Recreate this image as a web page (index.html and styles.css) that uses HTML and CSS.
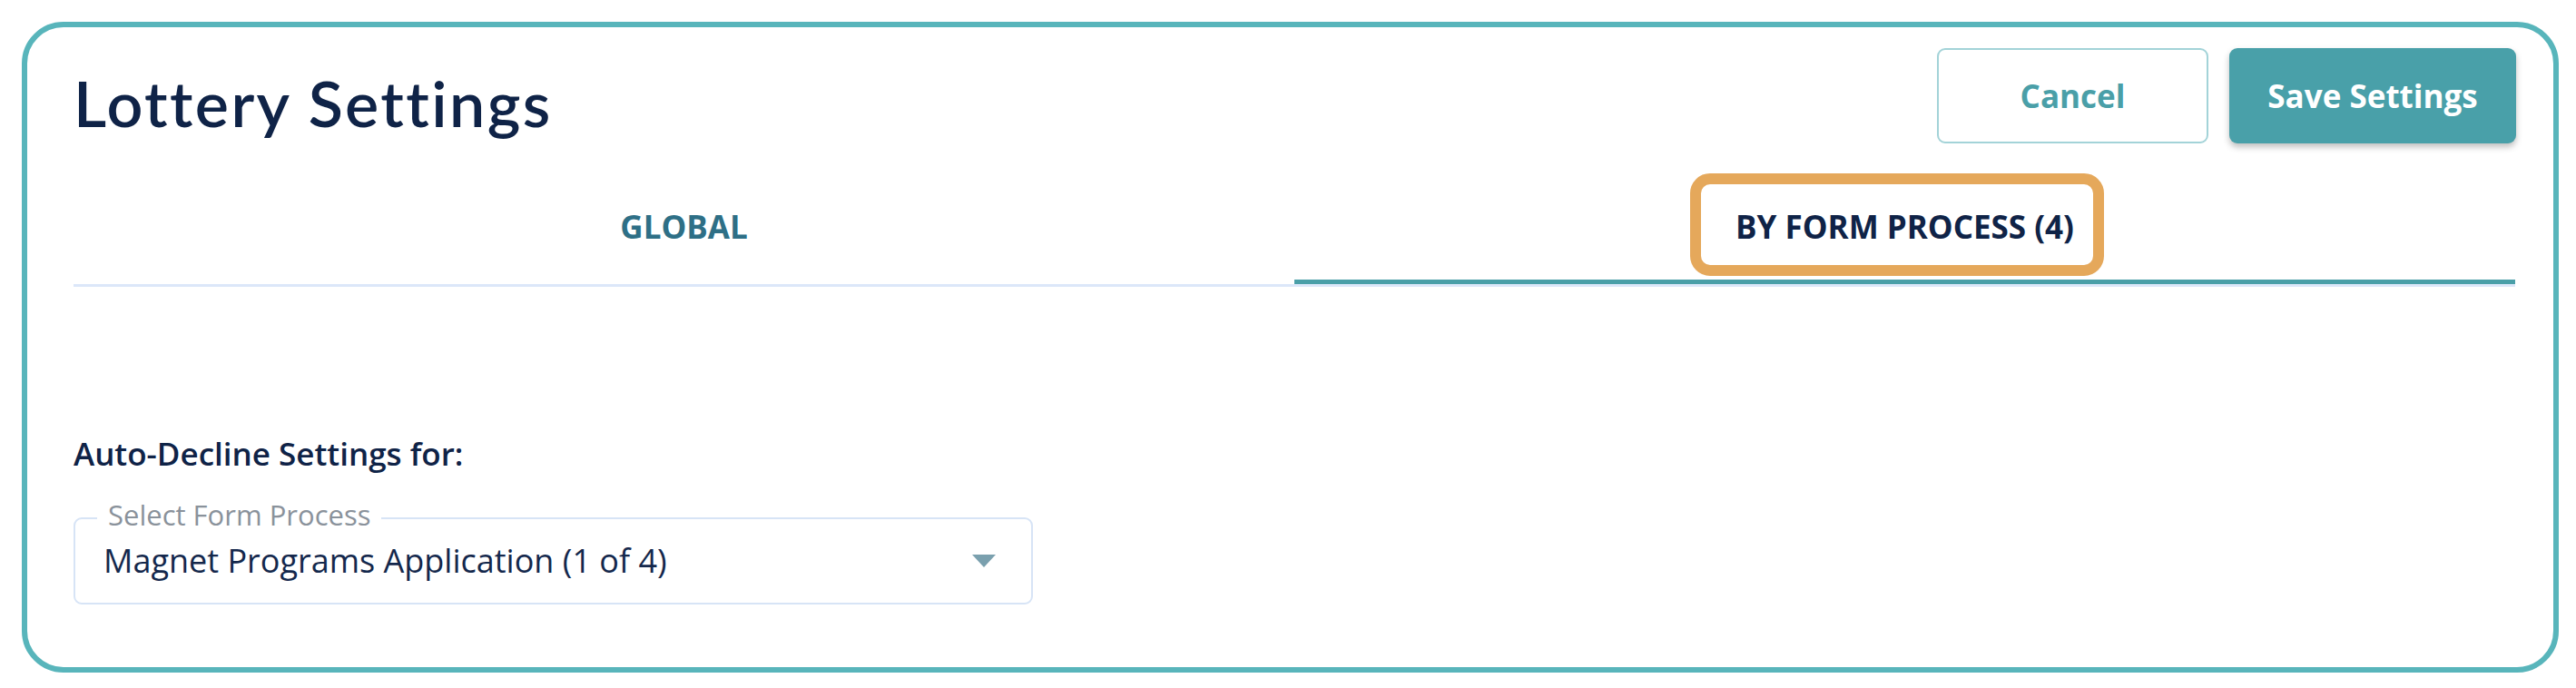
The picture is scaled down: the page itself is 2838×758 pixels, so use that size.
FILE: index.html
```html
<!DOCTYPE html>
<html lang="en">
<head>
  <meta charset="UTF-8">
  <meta name="viewport" content="width=device-width, initial-scale=1.0">
  <title>Lottery Settings</title>
  <link rel="stylesheet" href="styles.css">
</head>
<body>
  <div class="panel">
    <div class="panel-header">
      <h1>Lottery Settings</h1>
      <div class="actions">
        <button type="button" class="btn btn-outline">Cancel</button>
        <button type="button" class="btn btn-primary">Save Settings</button>
      </div>
    </div>

    <div class="tabs">
      <div class="tab">GLOBAL</div>
      <div class="tab active"><span class="tab-label highlighted">BY FORM PROCESS (4)</span></div>
    </div>

    <div class="section">
      <h2>Auto-Decline Settings for:</h2>
      <div class="select">
        <span class="select-label">Select Form Process</span>
        <span class="select-value">Magnet Programs Application (1 of 4)</span>
        <span class="select-arrow"></span>
      </div>
    </div>
  </div>
</body>
</html>
```

FILE: styles.css
```css
body {
  margin: 0;
  background: #fff;
  font-family: 'Open Sans', 'Noto Sans', sans-serif;
  color: #0f2347;
}

.panel {
  margin: 24px 19px 17px 24px;
  border: 6px solid #58b5bb;
  border-radius: 46px;
  padding: 23px 41px 69px 51px;
}

.panel-header {
  display: flex;
  justify-content: space-between;
  align-items: flex-start;
}

h1 {
  margin: 18px 0 0;
  font-family: Lato, 'Open Sans', sans-serif;
  font-weight: 600;
  font-size: 70px;
  line-height: 84px;
  letter-spacing: 2.4px;
  color: #0f2347;
}

.actions {
  display: flex;
  gap: 23px;
}

.btn {
  height: 105px;
  border-radius: 9px;
  font-family: 'Open Sans', sans-serif;
  font-weight: 700;
  font-size: 35px;
  cursor: pointer;
}

.btn-outline {
  width: 299px;
  background: #fff;
  border: 2px solid #a3d3d8;
  color: #4a9fa8;
}

.btn-primary {
  width: 316px;
  background: #49a0a9;
  border: none;
  color: #fff;
  box-shadow: 0 4px 7px rgba(0,0,0,0.25);
}

.tabs {
  display: grid;
  grid-template-columns: 1fr 1fr;
  border-bottom: 3px solid #dce7f9;
  margin-right: 1px;
}

.tab {
  text-align: center;
  padding: 69px 0 35px;
  line-height: 46px;
  font-size: 35px;
  font-weight: 700;
  color: #2e6f86;
  border-bottom: 5px solid transparent;
}

.tab.active {
  color: #0f2347;
  border-bottom-color: #4a9fa8;
}

.tab-label {
  position: relative;
}

/* annotation box drawn round the active tab */
.highlighted::before {
  content: "";
  position: absolute;
  top: -35px;
  bottom: -31px;
  left: -50px;
  right: -33px;
  border: 12px solid #e5a85b;
  border-radius: 22px;
}

.section {
  margin-top: 162px;
}

h2 {
  margin: 0;
  font-size: 35px;
  font-weight: 600;
  line-height: 44px;
  color: #0f2347;
}

.select {
  position: relative;
  margin-top: 48px;
  width: 1057px;
  height: 96px;
  box-sizing: border-box;
  border: 2px solid #d7e4f6;
  border-radius: 9px;
  display: flex;
  align-items: center;
  padding: 0 39px 0 31px;
}

.select-label {
  position: absolute;
  top: -20px;
  left: 24px;
  padding: 0 12px;
  background: #fff;
  font-size: 31px;
  line-height: 30px;
  color: #8a929b;
}

.select-value {
  flex: 1;
  font-size: 36px;
  line-height: 48px;
  color: #14284c;
}

.select-arrow {
  width: 0;
  height: 0;
  border-left: 13px solid transparent;
  border-right: 13px solid transparent;
  border-top: 14px solid #7aa0ae;
}
```
